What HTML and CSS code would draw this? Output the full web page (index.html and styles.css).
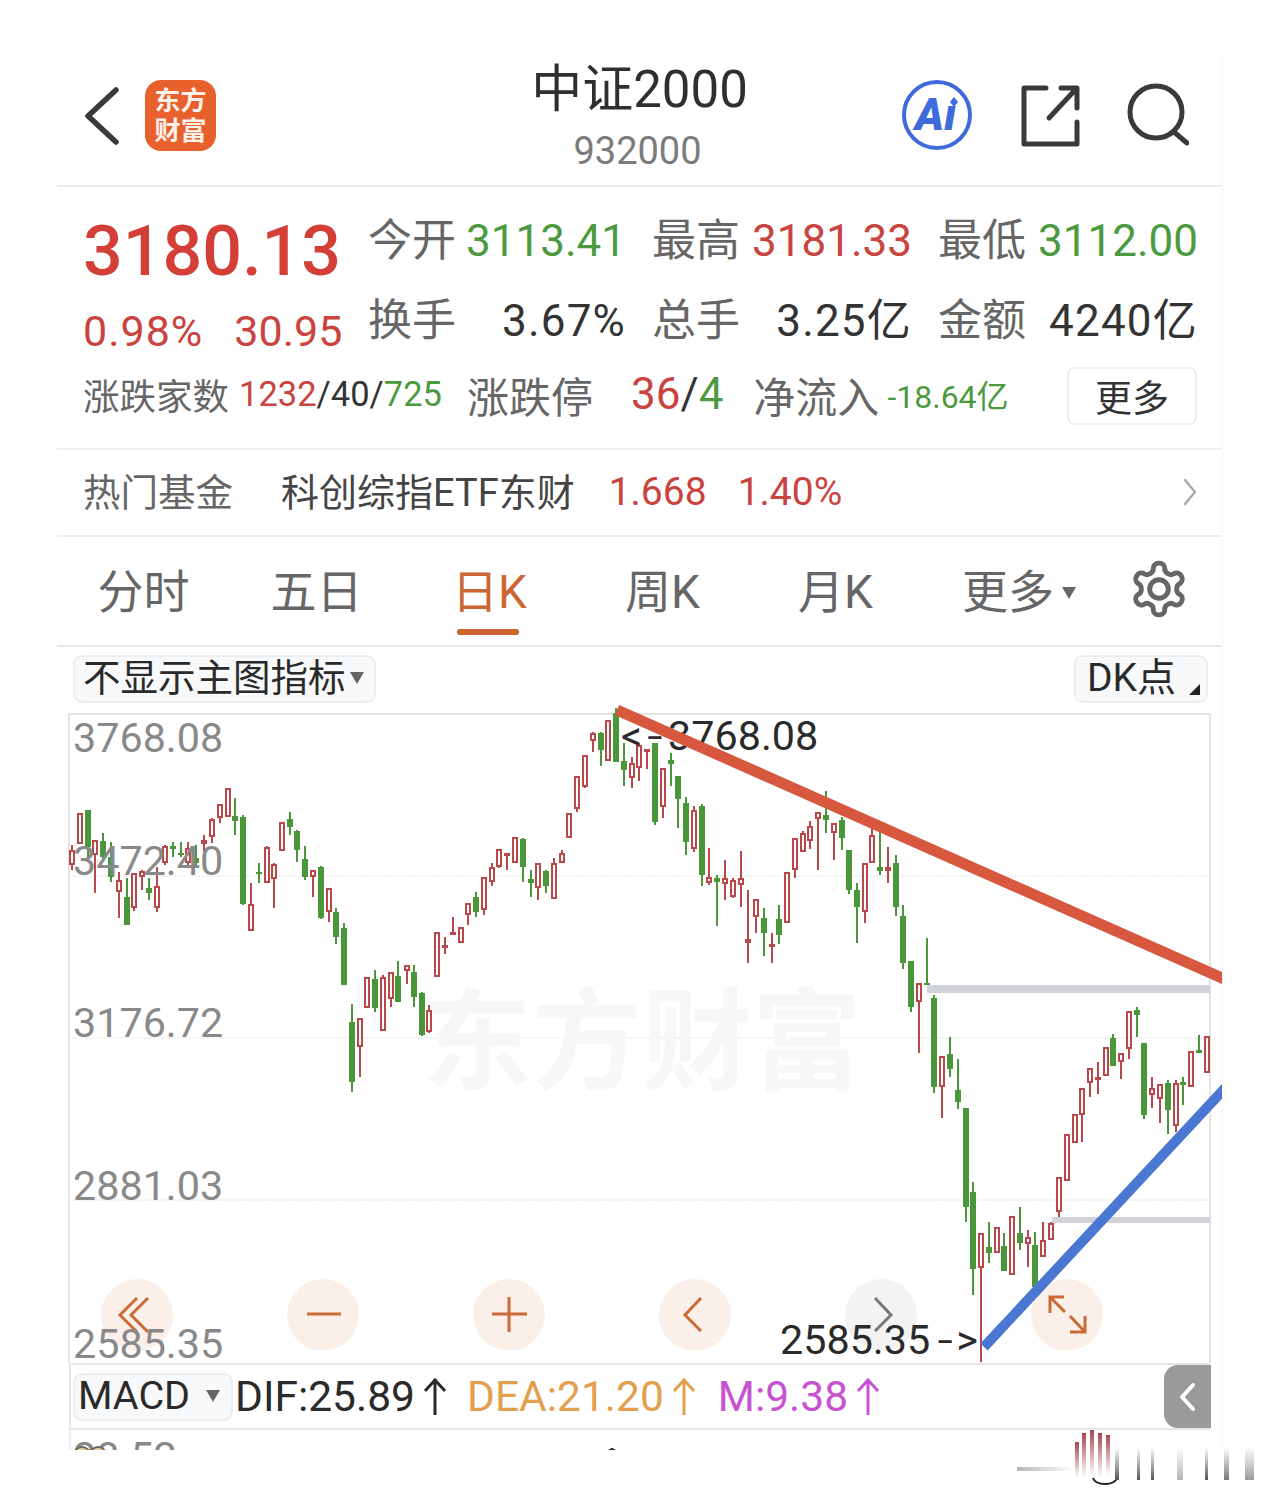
FILE: index.html
```html
<!DOCTYPE html>
<html lang="zh-CN">
<head>
  <meta charset="UTF-8">
  <title>中证2000</title>
  <meta name="viewport" content="width=device-width, initial-scale=1">
  <link rel="stylesheet" href="styles.css">
</head>
<body>
  <div class="screen">
    <header class="topbar">
      <div class="topbar-left">
        <svg class="icon-back" viewBox="0 0 38 60"><path d="M32 5L4 31l28 26"/></svg>
        <div class="logo">东方<br>财富</div>
      </div>
      <div class="title">
        <div class="title-name">中证2000</div>
        <div class="title-code">932000</div>
      </div>
      <div class="topbar-right">
        <svg class="icon-ai" viewBox="0 0 72 72">
          <circle cx="36" cy="36" r="33"/>
          <text x="14" y="51">Aı</text>
          <polygon points="53,18 57,23 53,28 49,23"/>
        </svg>
        <svg class="icon-line icon-share" viewBox="0 0 64 64"><path d="M26 5H4v56h53V39M29 35L56 6M41 5h16v20"/></svg>
        <svg class="icon-line icon-search" viewBox="0 0 64 64"><circle cx="31" cy="29" r="26"/><path d="M49 49l13 11"/></svg>
      </div>
    </header>

    <section class="quote">
      <div class="quote-main">
        <div class="price-col">
          <div class="price">3180.13</div>
          <div class="change"><span class="pct">0.98%</span><span>30.95</span></div>
        </div>
        <div class="quote-grid">
          <div class="cell"><span class="lbl">今开</span><span class="green">3113.41</span></div>
          <div class="cell"><span class="lbl">最高</span><span class="red">3181.33</span></div>
          <div class="cell"><span class="lbl">最低</span><span class="green">3112.00</span></div>
          <div class="cell wide"><span class="lbl">换手</span><span>3.67%</span></div>
          <div class="cell wide"><span class="lbl">总手</span><span>3.25亿</span></div>
          <div class="cell wide"><span class="lbl">金额</span><span>4240亿</span></div>
        </div>
      </div>
      <div class="quote-extra">
        <span class="extra-lbl">涨跌家数</span>
        <span class="extra-count"><span class="red">1232</span>/40/<span class="green">725</span></span>
        <span class="extra-big stop-lbl">涨跌停</span>
        <span class="extra-stop"><span class="red">36</span>/<span class="green">4</span></span>
        <span class="extra-big flow-lbl">净流入</span>
        <span class="extra-flow green">-18.64亿</span>
        <button class="more-btn">更多</button>
      </div>
    </section>

    <section class="fund">
      <span class="fund-lbl">热门基金</span>
      <span class="fund-name">科创综指ETF东财</span>
      <span class="fund-num red">1.668</span>
      <span class="fund-num fund-pct red">1.40%</span>
      <svg class="fund-arrow" viewBox="0 0 14 28"><path d="M2 2l10 12L2 26"/></svg>
    </section>

    <nav class="tabs">
      <div class="tab">分时</div>
      <div class="tab">五日</div>
      <div class="tab active">日K</div>
      <div class="tab">周K</div>
      <div class="tab">月K</div>
      <div class="tab tab-more">更多<i class="caret"></i></div>
      <div class="tab tab-gear">
        <svg viewBox="0 0 24 24"><path d="M12.22 2h-.44a2 2 0 0 0-2 2v.18a2 2 0 0 1-1 1.73l-.43.25a2 2 0 0 1-2 0l-.15-.08a2 2 0 0 0-2.73.73l-.22.38a2 2 0 0 0 .73 2.73l.15.1a2 2 0 0 1 1 1.72v.51a2 2 0 0 1-1 1.74l-.15.09a2 2 0 0 0-.73 2.73l.22.38a2 2 0 0 0 2.73.73l.15-.08a2 2 0 0 1 2 0l.43.25a2 2 0 0 1 1 1.73V20a2 2 0 0 0 2 2h.44a2 2 0 0 0 2-2v-.18a2 2 0 0 1 1-1.73l.43-.25a2 2 0 0 1 2 0l.15.08a2 2 0 0 0 2.73-.73l.22-.39a2 2 0 0 0-.73-2.73l-.15-.08a2 2 0 0 1-1-1.74v-.5a2 2 0 0 1 1-1.74l.15-.09a2 2 0 0 0 .73-2.73l-.22-.38a2 2 0 0 0-2.73-.73l-.15.08a2 2 0 0 1-2 0l-.43-.25a2 2 0 0 1-1-1.73V4a2 2 0 0 0-2-2z"/><circle cx="12" cy="12" r="3.6"/></svg>
      </div>
    </nav>

    <div class="toolbar">
      <div class="pick pick-main">不显示主图指标<i class="caret small"></i></div>
      <div class="pick pick-dk">DK点<i class="corner"></i></div>
    </div>

    <div class="chart">
      <svg class="chart-svg" viewBox="57 713 1165 650">
        <g class="grid-lines">
          <path d="M69 876H1210M69 1038H1210M69 1200H1210"/>
        </g>
        <text class="watermark" x="422" y="1081">东方财富</text>
        <rect class="level" x="927" y="985" width="283" height="8"/>
        <rect class="level" x="1052" y="1217" width="158" height="6"/>
        <g id="candles"></g>
        <g class="round-btns">
          <circle cx="137" cy="1315" r="36"/>
          <circle cx="323" cy="1315" r="36"/>
          <circle cx="509" cy="1315" r="36"/>
          <circle cx="695" cy="1315" r="36"/>
          <circle class="off" cx="881" cy="1315" r="36"/>
          <circle cx="1067" cy="1315" r="36"/>
        </g>
        <path class="btn-icon" d="M137 1298l-17 17 17 17M148 1298l-17 17 17 17M307 1314h34M492 1314h35M509 1297v35M701 1298l-16 17 16 16M1050 1313v-16h14M1050 1297l15 15M1085 1316v16h-15M1085 1332l-15-16"/>
        <path class="btn-icon off" d="M875 1298l16 17-16 16"/>
        <text class="axis" x="73" y="752">3768.08</text>
        <text class="axis" x="73" y="875">3472.40</text>
        <text class="axis" x="73" y="1037">3176.72</text>
        <text class="axis" x="73" y="1200">2881.03</text>
        <text class="axis" x="73" y="1358">2585.35</text>
        <text class="mark" x="621" y="750">&lt;<tspan class="dash" dx="5" dy="5">-</tspan><tspan dx="5" dy="-5">3768.08</tspan></text>
        <text class="mark" x="780" y="1354">2585.35<tspan class="dash" dx="7" dy="5">-</tspan><tspan dx="3" dy="-5">&gt;</tspan></text>
        <line class="trend-red" x1="617" y1="710" x2="1240" y2="986"/>
        <line class="trend-blue" x1="984" y1="1347" x2="1240" y2="1072"/>
      </svg>
    </div>

    <div class="macd-bar">
      <div class="pick pick-macd">MACD<i class="caret small"></i></div>
      <span class="macd-val">DIF:25.89<svg class="up" viewBox="0 0 24 38"><path d="M12 1v36M2 13L12 2l10 11"/></svg></span>
      <span class="macd-val dea">DEA:21.20<svg class="up" viewBox="0 0 24 38"><path d="M12 1v36M2 13L12 2l10 11"/></svg></span>
      <span class="macd-val em">M:9.38<svg class="up" viewBox="0 0 24 38"><path d="M12 1v36M2 13L12 2l10 11"/></svg></span>
      <div class="handle"><svg viewBox="0 0 20 32"><path d="M15 4L4 16l11 12"/></svg></div>
    </div>

    <div class="subchart">
      <span class="sub-val">28.52</span>
      <svg class="sub-heads" viewBox="0 0 34 22"><circle cx="9" cy="13" r="8"/><circle cx="25" cy="13" r="8"/></svg>
      <svg class="sub-tip" viewBox="0 0 24 10"><path d="M1 8L12 2l11 6"/></svg>
    </div>
  </div>

  <svg class="stamp" viewBox="1010 1425 245 65">
    <defs>
      <linearGradient id="fadeRed" x1="0" y1="0" x2="0" y2="1">
        <stop offset="0" stop-color="#a8474f"/>
        <stop offset="1" stop-color="#a8474f" stop-opacity="0"/>
      </linearGradient>
      <linearGradient id="fadeGrey" x1="0" y1="0" x2="0" y2="1">
        <stop offset="0" stop-color="#666" stop-opacity="0"/>
        <stop offset="1" stop-color="#555"/>
      </linearGradient>
      <linearGradient id="fadeSide" x1="0" y1="0" x2="1" y2="0">
        <stop offset="0" stop-color="#999" stop-opacity=".7"/>
        <stop offset="1" stop-color="#999" stop-opacity="0"/>
      </linearGradient>
    </defs>
    <rect x="1017" y="1467" width="58" height="4" fill="url(#fadeSide)"/>
    <rect x="1075" y="1442" width="4" height="36" fill="url(#fadeRed)"/>
    <rect x="1082" y="1433" width="4" height="44" fill="url(#fadeRed)"/>
    <rect x="1090" y="1430" width="4" height="46" fill="url(#fadeRed)"/>
    <rect x="1098" y="1433" width="4" height="44" fill="url(#fadeRed)"/>
    <rect x="1106" y="1435" width="4" height="40" fill="url(#fadeRed)"/>
    <path d="M1093 1478q2 6 12 6t12-6" fill="none" stroke="#222" stroke-width="2"/>
    <rect x="1115" y="1447" width="4" height="33" fill="url(#fadeGrey)"/>
    <rect x="1137" y="1447" width="3" height="33" fill="url(#fadeGrey)"/>
    <rect x="1151" y="1447" width="3" height="33" fill="url(#fadeGrey)"/>
    <rect x="1177" y="1447" width="6" height="33" fill="url(#fadeGrey)" opacity=".45"/>
    <rect x="1205" y="1447" width="3" height="33" fill="url(#fadeGrey)"/>
    <rect x="1224" y="1447" width="5" height="33" fill="url(#fadeGrey)" opacity=".8"/>
    <rect x="1245" y="1447" width="9" height="33" fill="url(#fadeGrey)" opacity=".6"/>
  </svg>

  <script src="candles.js"></script>
</body>
</html>
```

FILE: styles.css
```css
* {
  box-sizing: border-box;
}

body {
  margin: 0;
  height: 1510px;
  overflow: hidden;
  background: #fff;
  color: #333;
  font-family: Roboto, "Noto Sans CJK SC", sans-serif;
  position: relative;
}

.screen {
  width: 1166px;
  height: 1393px;
  margin: 57px 0 0 57px;
  border-right: 1px solid #f6f6f6;
  overflow: hidden;
}

.red { color: #c9443f; }
.green { color: #4c9a3f; }

/* top bar */
.topbar {
  height: 130px;
  border-bottom: 2px solid #ececec;
  display: grid;
  grid-template-columns: 1fr auto 1fr;
}

.topbar-left {
  display: flex;
  align-items: center;
  padding-left: 27px;
  padding-bottom: 12px;
}

.icon-back {
  width: 38px;
  height: 60px;
  fill: none;
  stroke: #3a3a3a;
  stroke-width: 5.5;
  stroke-linecap: round;
  stroke-linejoin: round;
}

.logo {
  width: 71px;
  height: 71px;
  margin-left: 23px;
  border-radius: 16px;
  background: #e8602b;
  color: #fdf1ea;
  font-size: 26px;
  font-weight: 700;
  line-height: 30px;
  text-align: center;
  padding-top: 6px;
}

.title {
  text-align: center;
  padding-top: 4px;
}

.title-name {
  font-size: 51px;
  line-height: 58px;
  color: #2f2f2f;
}

.title-code {
  font-size: 38px;
  line-height: 46px;
  color: #7b7b7b;
  margin-top: 9px;
  margin-right: 4px;
}

.topbar-right {
  display: flex;
  align-items: center;
  padding-bottom: 12px;
}

.icon-ai {
  width: 72px;
  height: 72px;
  margin-left: 153px;
}

.icon-ai circle {
  fill: none;
  stroke: #3f6adb;
  stroke-width: 4;
}

.icon-ai text {
  font-family: Roboto, sans-serif;
  font-size: 44px;
  font-weight: 900;
  font-style: italic;
  fill: #3f6adb;
}

.icon-ai polygon {
  fill: #3f6adb;
}

.icon-line {
  fill: none;
  stroke: #3a3a3a;
  stroke-width: 5;
  stroke-linecap: round;
  stroke-linejoin: round;
}

.icon-share {
  width: 64px;
  height: 64px;
  margin-left: 47px;
}

.icon-search {
  width: 64px;
  height: 64px;
  margin-left: 41px;
}

/* quote */
.quote {
  height: 263px;
  border-bottom: 2px solid #f0f0f0;
}

.quote-main {
  display: flex;
  padding: 29px 0 0 26px;
}

.price-col {
  width: 285px;
}

.price {
  font-size: 70px;
  font-weight: 500;
  line-height: 70px;
  color: #d33f37;
}

.change {
  display: flex;
  gap: 31px;
  font-size: 43px;
  line-height: 50px;
  color: #c9443f;
  margin-top: 20px;
}

.pct {
  letter-spacing: 1px;
}

.quote-grid {
  display: grid;
  grid-template-columns: 258px 260px 260px;
  column-gap: 26px;
  row-gap: 17px;
  margin-top: -3px;
  font-size: 44px;
  line-height: 56px;
  color: #333;
}

.cell {
  display: flex;
  justify-content: space-between;
}

.cell.wide span:last-child {
  letter-spacing: 1.2px;
}

.lbl {
  color: #666;
}

.quote-extra {
  display: flex;
  align-items: center;
  height: 60px;
  margin-top: 8px;
  padding-left: 26px;
  white-space: nowrap;
}

.extra-lbl {
  font-size: 36.5px;
  color: #666;
}

.extra-count {
  font-size: 34.5px;
  margin-left: 10px;
}

.extra-big {
  font-size: 42px;
  color: #666;
}

.stop-lbl {
  margin-left: 25px;
}

.extra-stop {
  font-size: 44px;
  margin-left: 38px;
}

.flow-lbl {
  margin-left: 30px;
}

.extra-flow {
  font-size: 32px;
  margin-left: 8px;
}

.more-btn {
  margin-left: auto;
  margin-right: 25px;
  margin-top: 4px;
  width: 130px;
  height: 58px;
  border: 2px solid #eee;
  border-radius: 8px;
  background: #fff;
  font-family: inherit;
  font-size: 37px;
  color: #333;
  padding: 0;
}

/* hot fund */
.fund {
  height: 87px;
  border-bottom: 2px solid #ececec;
  display: flex;
  align-items: center;
  padding: 0 25px 6px 26px;
  font-size: 37.5px;
}

.fund-lbl {
  color: #666;
}

.fund-name {
  margin-left: 48px;
  font-size: 38px;
  color: #444;
}

.fund-num {
  margin-left: 34px;
  margin-top: 4px;
  font-size: 39px;
}

.fund-pct {
  margin-left: 31px;
}

.fund-arrow {
  margin-left: auto;
  margin-top: 4px;
  width: 14px;
  height: 28px;
  fill: none;
  stroke: #aaa;
  stroke-width: 2.5;
  stroke-linecap: round;
  stroke-linejoin: round;
}

/* period tabs */
.tabs {
  height: 110px;
  border-bottom: 2px solid #e8e8e8;
  display: grid;
  grid-template-columns: repeat(6, 173px) 127px;
  align-items: center;
  font-size: 46px;
  color: #666;
  text-align: center;
}

.tab {
  position: relative;
  padding-bottom: 6px;
}

.tab.active {
  color: #cc6633;
}

.tab.active::after {
  content: "";
  position: absolute;
  left: 54px;
  top: 74px;
  width: 62px;
  height: 6px;
  border-radius: 3px;
  background: #cf6332;
}

.tab-more {
  text-align: left;
  padding-left: 40px;
}

.caret {
  display: inline-block;
  margin-left: 8px;
  border-left: 7px solid transparent;
  border-right: 7px solid transparent;
  border-top: 12px solid #666;
  vertical-align: 9px;
}

.caret.small {
  margin-left: 4px;
}

.tab-gear {
  padding-bottom: 4px;
}

.tab-gear svg {
  display: block;
  margin: 0 auto;
  width: 62px;
  height: 62px;
  fill: none;
  stroke: #666;
  stroke-width: 1.9;
}

/* dropdown row */
.toolbar {
  height: 66px;
  padding: 8px 14px 0 16px;
  display: flex;
  justify-content: space-between;
}

.pick {
  height: 48px;
  border: 2px solid #ebedef;
  border-radius: 9px;
  background: #f8f9fa;
  font-size: 37.5px;
  line-height: 42px;
  padding: 0 8px;
  color: #2a2a2a;
  white-space: nowrap;
}

.pick .caret {
  vertical-align: 7px;
  border-left-width: 7px;
  border-right-width: 7px;
  border-top-width: 12px;
}

.pick-main {
  width: 303px;
}

.pick-dk {
  width: 134px;
  position: relative;
  padding-left: 11px;
  font-size: 39px;
}

.corner {
  position: absolute;
  right: 6px;
  bottom: 6px;
  border-left: 11px solid transparent;
  border-bottom: 11px solid #222;
}

/* chart */
.chart {
  position: relative;
  height: 650px;
}

.chart::before {
  content: "";
  position: absolute;
  top: 0;
  bottom: 0;
  left: 11px;
  width: 1143px;
  box-sizing: border-box;
  border: 2px solid #e4e4e4;
  border-bottom: 0;
}

.chart-svg {
  position: relative;
  z-index: 1;
  display: block;
  width: 1165px;
  height: 650px;
  overflow: visible;
}

.grid-lines path {
  fill: none;
  stroke: #e4e4e4;
  stroke-width: 1;
  stroke-dasharray: 2 1;
}

.watermark {
  font-size: 110px;
  font-weight: 700;
  fill: #f7f7f7;
}

.level {
  fill: #d2d3d8;
}

.round-btns circle {
  fill: #fbf0e9;
}

.round-btns .off {
  fill: #f3f3f3;
}

.btn-icon {
  fill: none;
  stroke: #cc6a36;
  stroke-width: 3;
}

.btn-icon.off {
  stroke: #777;
}

.axis {
  font-size: 41.3px;
  fill: #898989;
}

.mark {
  font-size: 41.3px;
  fill: #2a2a2a;
}

.dash {
  font-size: 56px;
  font-weight: 300;
}

.trend-red {
  stroke: #d7573f;
  stroke-width: 11;
}

.trend-blue {
  stroke: #4a77d1;
  stroke-width: 10;
}

/* macd row */
.macd-bar {
  position: relative;
  height: 67px;
  border-top: 2px solid #e6e6e6;
  border-bottom: 2px solid #e6e6e6;
  margin: 0 12px;
  display: flex;
  align-items: center;
  font-size: 42.5px;
  border-left: 2px solid #e6e6e6;
}

.pick-macd {
  margin-left: 2px;
  width: 160px;
  padding-left: 3px;
  font-size: 39.5px;
}

.pick-macd .caret {
  margin-left: 16px;
}

.macd-val {
  display: flex;
  align-items: center;
  color: #2a2a2a;
  margin-left: 2px;
  white-space: nowrap;
}

.up {
  width: 24px;
  height: 38px;
  margin-left: 8px;
  fill: none;
  stroke: currentColor;
  stroke-width: 3;
}

.dea {
  color: #e2a04e;
  margin-left: 20px;
}

.em {
  color: #c752d2;
  margin-left: 22px;
}

.handle {
  position: absolute;
  right: -1px;
  top: 0;
  width: 47px;
  height: 63px;
  border-radius: 14px 0 0 14px;
  background: #9a9a9a;
  display: flex;
  align-items: center;
  justify-content: center;
}

.handle svg {
  width: 20px;
  height: 32px;
  fill: none;
  stroke: #fff;
  stroke-width: 4;
  stroke-linecap: round;
  stroke-linejoin: round;
}

/* cropped indicator below */
.subchart {
  position: relative;
  height: 21px;
  margin-left: 12px;
  border-left: 2px solid #eee;
  overflow: hidden;
}

.sub-val {
  position: absolute;
  left: 2px;
  top: 3px;
  font-size: 41.3px;
  line-height: 48px;
  color: #888;
}

.sub-heads {
  position: absolute;
  left: 2px;
  top: 12px;
  width: 34px;
  height: 22px;
  fill: #e9d4a2;
  stroke: #6d665c;
  stroke-width: 2;
}

.sub-tip {
  position: absolute;
  left: 529px;
  top: 17px;
  width: 24px;
  height: 10px;
  fill: none;
  stroke: #222;
  stroke-width: 2;
}

.stamp {
  position: absolute;
  left: 1010px;
  top: 1425px;
  width: 245px;
  height: 65px;
}
```

FILE: candles.js
```js
// [x, "r" hollow up / "g" solid down, wick top, wick bottom, body top, body bottom]
const candles = [
  [72,"r",845,870,850,865],[80,"r",813,844,813,844],[88,"g",810,860,810,847],[95,"r",840,893,840,855],
  [103,"g",833,860,841,857],[111,"g",842,882,857,877],[119,"r",872,918,880,892],[127,"g",878,925,897,925],
  [134,"r",873,911,873,908],[142,"r",870,890,871,877],[149,"g",878,900,888,893],[157,"r",867,912,886,908],
  [165,"r",845,865,846,863],[173,"g",842,857,846,849],[181,"g",842,857,853,855],[188,"r",842,865,848,863],
  [196,"g",845,865,858,863],[204,"r",835,852,840,844],[212,"r",818,843,819,837],[220,"r",804,823,804,818],
  [228,"r",788,817,788,817],[235,"g",798,835,816,821],[243,"g",815,905,817,904],[251,"r",883,931,904,931],
  [259,"g",863,883,872,874],[267,"r",846,883,847,883],[274,"r",863,908,864,879],[282,"r",822,851,822,851],
  [290,"g",812,835,819,827],[297,"g",830,862,831,850],[305,"g",846,880,859,877],[313,"r",870,897,870,877],
  [321,"g",866,919,867,918],[329,"r",888,922,888,912],[336,"g",908,944,912,937],[344,"g",923,985,928,985],
  [352,"g",1004,1092,1022,1082],[360,"r",1018,1077,1018,1047],[367,"r",977,1008,977,1008],[375,"g",970,1012,979,1008],
  [383,"r",975,1031,977,1031],[391,"r",972,1007,972,999],[398,"g",961,1002,976,1002],[407,"r",965,984,965,971],
  [414,"g",965,1007,972,997],[422,"g",992,1036,993,1035],[429,"r",1005,1033,1010,1032],[437,"r",932,977,932,977],
  [445,"r",937,954,945,947],[453,"r",917,935,932,935],[461,"r",927,943,927,943],[468,"r",903,925,903,915],
  [476,"g",892,917,897,912],[484,"r",877,915,877,910],[492,"r",863,886,867,882],[499,"r",849,868,849,867],
  [507,"r",853,870,853,856],[515,"r",837,863,837,863],[523,"g",838,882,839,867],[531,"g",870,897,879,883],
  [538,"r",863,900,863,888],[546,"g",870,893,871,886],[554,"r",858,899,863,899],[562,"r",850,863,853,863],
  [569,"r",813,838,813,838],[577,"r",776,812,776,809],[585,"r",755,788,755,787],[593,"r",732,752,733,741],
  [601,"g",732,766,733,750],[608,"r",720,761,720,761],[616,"g",708,762,713,762],[624,"g",743,786,761,770],
  [632,"r",757,788,763,778],[639,"r",743,781,745,768],[647,"r",749,769,749,752],[655,"g",743,825,743,822],
  [663,"r",768,818,768,807],[671,"g",753,786,760,764],[678,"g",776,828,776,799],[686,"g",797,855,803,842],
  [694,"r",806,852,810,849],[702,"g",804,886,806,875],[709,"r",848,885,877,883],[717,"g",875,926,878,882],
  [725,"r",860,900,878,884],[733,"r",878,898,880,897],[741,"r",851,907,878,885],[748,"r",890,963,939,943],
  [756,"r",899,933,899,917],[764,"g",908,956,918,933],[772,"r",933,963,944,947],[779,"g",905,944,919,935],
  [787,"r",872,923,872,923],[795,"r",838,878,838,870],[803,"r",831,852,833,852],[810,"r",821,849,826,841],
  [818,"r",812,870,812,819],[826,"g",791,833,815,820],[834,"r",823,860,823,833],[842,"g",817,850,820,838],
  [849,"g",850,894,850,890],[857,"g",883,943,890,907],[865,"r",863,923,863,912],[872,"r",828,863,835,863],
  [880,"g",832,875,867,871],[888,"r",847,883,867,871],[896,"g",855,916,863,907],[903,"g",905,969,916,963],
  [911,"g",961,1012,961,1007],[919,"r",983,1053,983,1002],[927,"g",938,985,983,985],[934,"g",995,1093,998,1087],
  [942,"r",1056,1118,1056,1087],[950,"g",1037,1077,1054,1069],[958,"g",1059,1109,1090,1102],[966,"g",1108,1222,1108,1207],
  [973,"g",1182,1295,1192,1269],[981,"r",1233,1362,1233,1268],[989,"g",1222,1263,1247,1253],[997,"r",1227,1253,1227,1253],
  [1004,"g",1233,1271,1246,1271],[1012,"r",1216,1275,1216,1275],[1020,"g",1207,1250,1233,1243],[1028,"r",1230,1267,1237,1244],
  [1035,"g",1232,1287,1245,1287],[1043,"r",1222,1257,1240,1257],[1051,"r",1222,1240,1223,1240],[1059,"r",1177,1217,1177,1212],
  [1067,"r",1134,1181,1134,1181],[1075,"r",1114,1143,1114,1143],[1082,"r",1088,1142,1088,1115],[1090,"r",1068,1097,1068,1083],
  [1098,"r",1062,1094,1077,1078],[1106,"r",1047,1076,1047,1076],[1113,"g",1034,1066,1038,1066],[1121,"r",1053,1079,1053,1062],
  [1129,"r",1011,1059,1011,1049],[1137,"g",1007,1037,1010,1015],[1144,"g",1043,1119,1043,1115],[1152,"r",1077,1108,1088,1095],
  [1160,"r",1084,1123,1084,1099],[1168,"g",1080,1134,1083,1110],[1176,"r",1080,1132,1083,1126],[1183,"g",1077,1105,1082,1085],
  [1191,"r",1051,1087,1051,1087],[1199,"g",1035,1053,1050,1053],[1207,"r",1036,1073,1036,1073]
];

const RED = "#b9484b";
const GREEN = "#4a963b";
const NS = "http://www.w3.org/2000/svg";
const group = document.getElementById("candles");

function addEl(name, attrs) {
  const el = document.createElementNS(NS, name);
  for (const k in attrs) el.setAttribute(k, attrs[k]);
  group.appendChild(el);
}

candles.forEach(([x, type, wickTop, wickBot, bodyTop, bodyBot]) => {
  const color = type === "r" ? RED : GREEN;
  addEl("line", { x1: x, x2: x, y1: wickTop, y2: wickBot, stroke: color, "stroke-width": 2 });
  if (type === "r") {
    addEl("rect", { x: x - 2, y: bodyTop + 1, width: 4, height: Math.max(bodyBot - bodyTop - 2, 1), fill: "#fff", stroke: color, "stroke-width": 2 });
  } else {
    addEl("rect", { x: x - 3, y: bodyTop, width: 6, height: bodyBot - bodyTop, fill: color });
  }
});
```
